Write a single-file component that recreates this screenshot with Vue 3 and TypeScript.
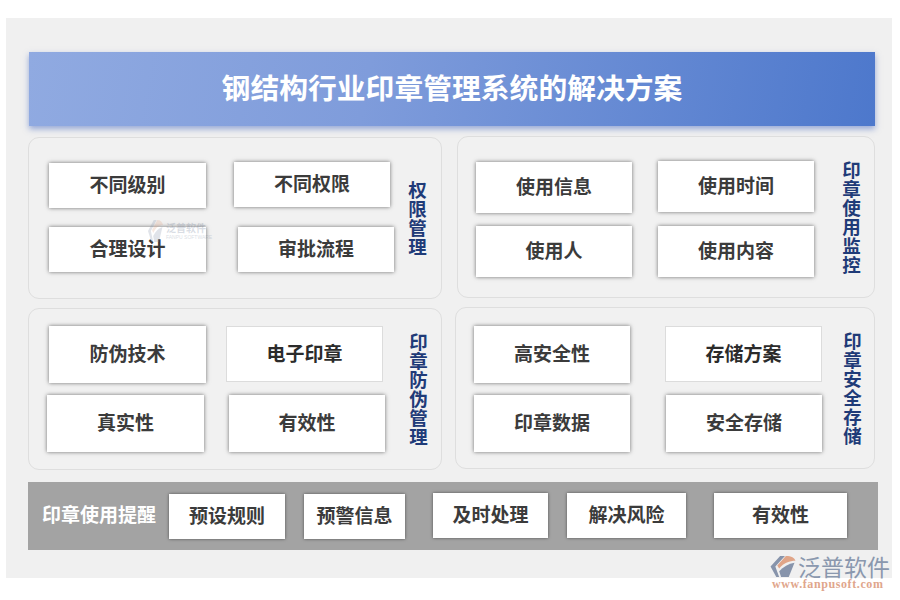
<script setup lang="ts">
const title: string = '钢结构行业印章管理系统的解决方案'
</script>

<template>
  <div class="screen">
    <div class="page">
      <header class="banner">{{ title }}</header>

      <div class="line line-a">
        <section class="panel tl">
          <div class="col">
            <div class="row r1">
              <div class="btn w157 h45 drop1 ml20">不同级别</div>
              <div class="btn w156 h45 ml28">不同权限</div>
            </div>
            <div class="row r2">
              <div class="btn w157 h45 ml20">合理设计</div>
              <div class="btn w156 h45 ml32">审批流程</div>
            </div>
          </div>
          <h2 class="side">权限管理</h2>
        </section>

        <section class="panel tr">
          <div class="col">
            <div class="row r3">
              <div class="btn w156 h51 drop1 ml18">使用信息</div>
              <div class="btn w156 h51 ml26">使用时间</div>
            </div>
            <div class="row r4">
              <div class="btn w156 h51 ml18">使用人</div>
              <div class="btn w156 h51 ml26">使用内容</div>
            </div>
          </div>
          <h2 class="side">印章使用监控</h2>
        </section>
      </div>

      <div class="line line-b">
        <section class="panel bl">
          <div class="col">
            <div class="row r5">
              <div class="btn w157 h57 ml20">防伪技术</div>
              <div class="btn flat w157 h56 ml20">电子印章</div>
            </div>
            <div class="row r6">
              <div class="btn w157 h57 ml18">真实性</div>
              <div class="btn w156 h57 ml25">有效性</div>
            </div>
          </div>
          <h2 class="side">印章防伪管理</h2>
        </section>

        <section class="panel br">
          <div class="col">
            <div class="row r7">
              <div class="btn w156 h57 ml18">高安全性</div>
              <div class="btn flat w157 h56 ml35">存储方案</div>
            </div>
            <div class="row r6">
              <div class="btn w156 h57 ml18">印章数据</div>
              <div class="btn w156 h57 ml36">安全存储</div>
            </div>
          </div>
          <h2 class="side">印章安全存储</h2>
        </section>
      </div>

      <footer class="strip">
        <div class="strip-label">印章使用提醒</div>
        <div class="btn w116 h45 drop1 s1">预设规则</div>
        <div class="btn w101 h45 drop1 s2">预警信息</div>
        <div class="btn w115 h45 s3">及时处理</div>
        <div class="btn w119 h45 s4">解决风险</div>
        <div class="btn w133 h45 s5">有效性</div>
      </footer>
    </div>

    <div class="mark" aria-hidden="true">
      <svg class="mark-icon" viewBox="0 0 26 24" preserveAspectRatio="none">
        <path d="M10 1 L15 1 L5 12 L9 23 L6 23 L0 12 Z" fill="#8794ab" />
        <path d="M16 1 C22 1 25 3 26 6 C20 6 14 8 9 14 L7 11 Z" fill="#e0a588" />
        <path d="M25 8 L19 23 L11 23 L9 17 C13 12 19 9 25 8 Z" fill="#8794ab" />
      </svg>
      <div class="mark-text">
        <div class="mark-cn">泛普软件</div>
        <div class="mark-en">FANPU SOFTWARE</div>
      </div>
    </div>

    <div class="logo">
      <div class="logo-top">
        <svg class="logo-icon" viewBox="0 0 26 24">
          <path d="M10 1 L15 1 L5 12 L9 23 L6 23 L0 12 Z" fill="#8794ab" />
          <path d="M16 1 C22 1 25 3 26 6 C20 6 14 8 9 14 L7 11 Z" fill="#e0a588" />
          <path d="M25 8 L19 23 L11 23 L9 17 C13 12 19 9 25 8 Z" fill="#8794ab" />
        </svg>
        <div class="logo-cn">泛普软件</div>
      </div>
      <div class="logo-en">www.fanpusoft.com</div>
    </div>
  </div>
</template>

<style>
html,
body {
  margin: 0;
  background: #fff;
}
</style>

<style scoped>
.screen {
  position: relative;
  width: 900px;
  height: 600px;
  padding-top: 18px;
  box-sizing: border-box;
  overflow: hidden;
  font-family: "Noto Sans CJK SC", "Noto Sans", sans-serif;
}
.page {
  width: 886px;
  height: 560px;
  margin-left: 6px;
  padding: 34px 0 0 22px;
  box-sizing: border-box;
  background: #f0f0f0;
}
.banner {
  width: 846px;
  height: 74px;
  margin-left: 1px;
  padding-bottom: 5px;
  box-sizing: border-box;
  display: flex;
  align-items: center;
  justify-content: center;
  color: #fff;
  font-size: 28.8px;
  font-weight: 700;
  background: linear-gradient(100deg, #90aae1 0%, #7f9cdb 40%, #4d78cc 100%);
  box-shadow: 0 3px 6px rgba(60, 95, 190, 0.5);
}
.line {
  display: flex;
  align-items: flex-start;
}
.line-a {
  margin-top: 10px;
  height: 172px;
}
.line-b {
  height: 174px;
}
.panel {
  display: flex;
  flex: none;
  height: 162px;
  box-sizing: border-box;
  border: 1px solid #dedede;
  border-radius: 11px;
  background: #f1f1f1;
}
.tl {
  width: 414px;
  margin-top: 1px;
}
.tr {
  width: 418px;
  margin-left: 15px;
}
.bl {
  width: 414px;
}
.br {
  width: 420px;
  margin-left: 13px;
  margin-top: -1px;
}
.col {
  flex: none;
}
.tl .col {
  width: 379px;
}
.tr .col {
  width: 384px;
}
.bl .col {
  width: 380px;
}
.br .col {
  width: 387px;
}
.row {
  display: flex;
  align-items: flex-start;
}
.r1 {
  margin-top: 24px;
}
.r2 {
  margin-top: 19px;
}
.r3 {
  margin-top: 24px;
}
.r4 {
  margin-top: 13px;
}
.r5 {
  margin-top: 17px;
}
.r6 {
  margin-top: 12px;
}
.r7 {
  margin-top: 18px;
}
.btn {
  flex: none;
  display: flex;
  align-items: center;
  justify-content: center;
  box-sizing: border-box;
  padding-bottom: 5px;
  background: #fff;
  color: #3b3b3b;
  font-size: 19px;
  font-weight: 700;
  box-shadow: 0 0 4px rgba(0, 0, 0, 0.55);
}
.flat {
  padding-bottom: 3px;
  border: 1px solid #dcdcdc;
  box-shadow: none;
  color: #2b2b2b;
}
.drop1 {
  margin-top: 1px;
}
.w101 { width: 101px; }
.w115 { width: 115px; }
.w116 { width: 116px; }
.w119 { width: 119px; }
.w133 { width: 133px; }
.w156 { width: 156px; }
.w157 { width: 157px; }
.h45 { height: 45px; }
.h51 { height: 51px; }
.h56 { height: 56px; }
.h57 { height: 57px; }
.ml18 { margin-left: 18px; }
.ml20 { margin-left: 20px; }
.ml25 { margin-left: 25px; }
.ml26 { margin-left: 26px; }
.ml28 { margin-left: 28px; }
.ml32 { margin-left: 32px; }
.ml35 { margin-left: 35px; }
.ml36 { margin-left: 36px; }
.side {
  flex: none;
  align-self: center;
  width: 19px;
  margin: 0;
  color: #1f3b78;
  font-size: 18.5px;
  font-weight: 700;
  line-height: 19px;
  text-align: center;
}
.strip {
  display: flex;
  align-items: flex-start;
  width: 850px;
  height: 68px;
  box-sizing: border-box;
  padding-top: 11px;
  background: #a3a3a3;
}
.strip-label {
  flex: none;
  width: 114px;
  margin: 9px 0 0 14px;
  color: #fff;
  font-size: 19px;
  font-weight: 700;
  line-height: 24px;
  white-space: nowrap;
}
.strip .btn {
  box-shadow: 0 0 3px rgba(0, 0, 0, 0.5);
}
.s1 { margin-left: 13px; }
.s2 { margin-left: 19px; }
.s3 { margin-left: 28px; }
.s4 { margin-left: 19px; }
.s5 { margin-left: 28px; }
.mark {
  position: absolute;
  left: 148px;
  top: 219px;
  display: flex;
  align-items: flex-start;
  gap: 3px;
  opacity: 0.25;
}
.mark-icon {
  width: 15px;
  height: 24px;
}
.mark-cn {
  color: #6d7c95;
  font-size: 10px;
  line-height: 13px;
  margin-top: 2px;
  font-weight: 700;
  white-space: nowrap;
}
.mark-en {
  color: #6d7c95;
  font-family: "Liberation Sans", sans-serif;
  font-size: 5px;
  line-height: 6px;
  white-space: nowrap;
}
.logo {
  position: absolute;
  left: 770px;
  top: 554px;
  width: 122px;
}
.logo-top {
  display: flex;
  align-items: center;
  height: 25px;
}
.logo-icon {
  flex: none;
  width: 26px;
  height: 23px;
}
.logo-cn {
  margin-left: 2px;
  color: #8a98ae;
  font-size: 23px;
  line-height: 25px;
  white-space: nowrap;
}
.logo-en {
  margin: 0 0 0 2px;
  color: #dfa68c;
  font-family: "Liberation Serif", serif;
  font-size: 12px;
  font-weight: 700;
  line-height: 10px;
  letter-spacing: 0.6px;
  white-space: nowrap;
}
</style>
